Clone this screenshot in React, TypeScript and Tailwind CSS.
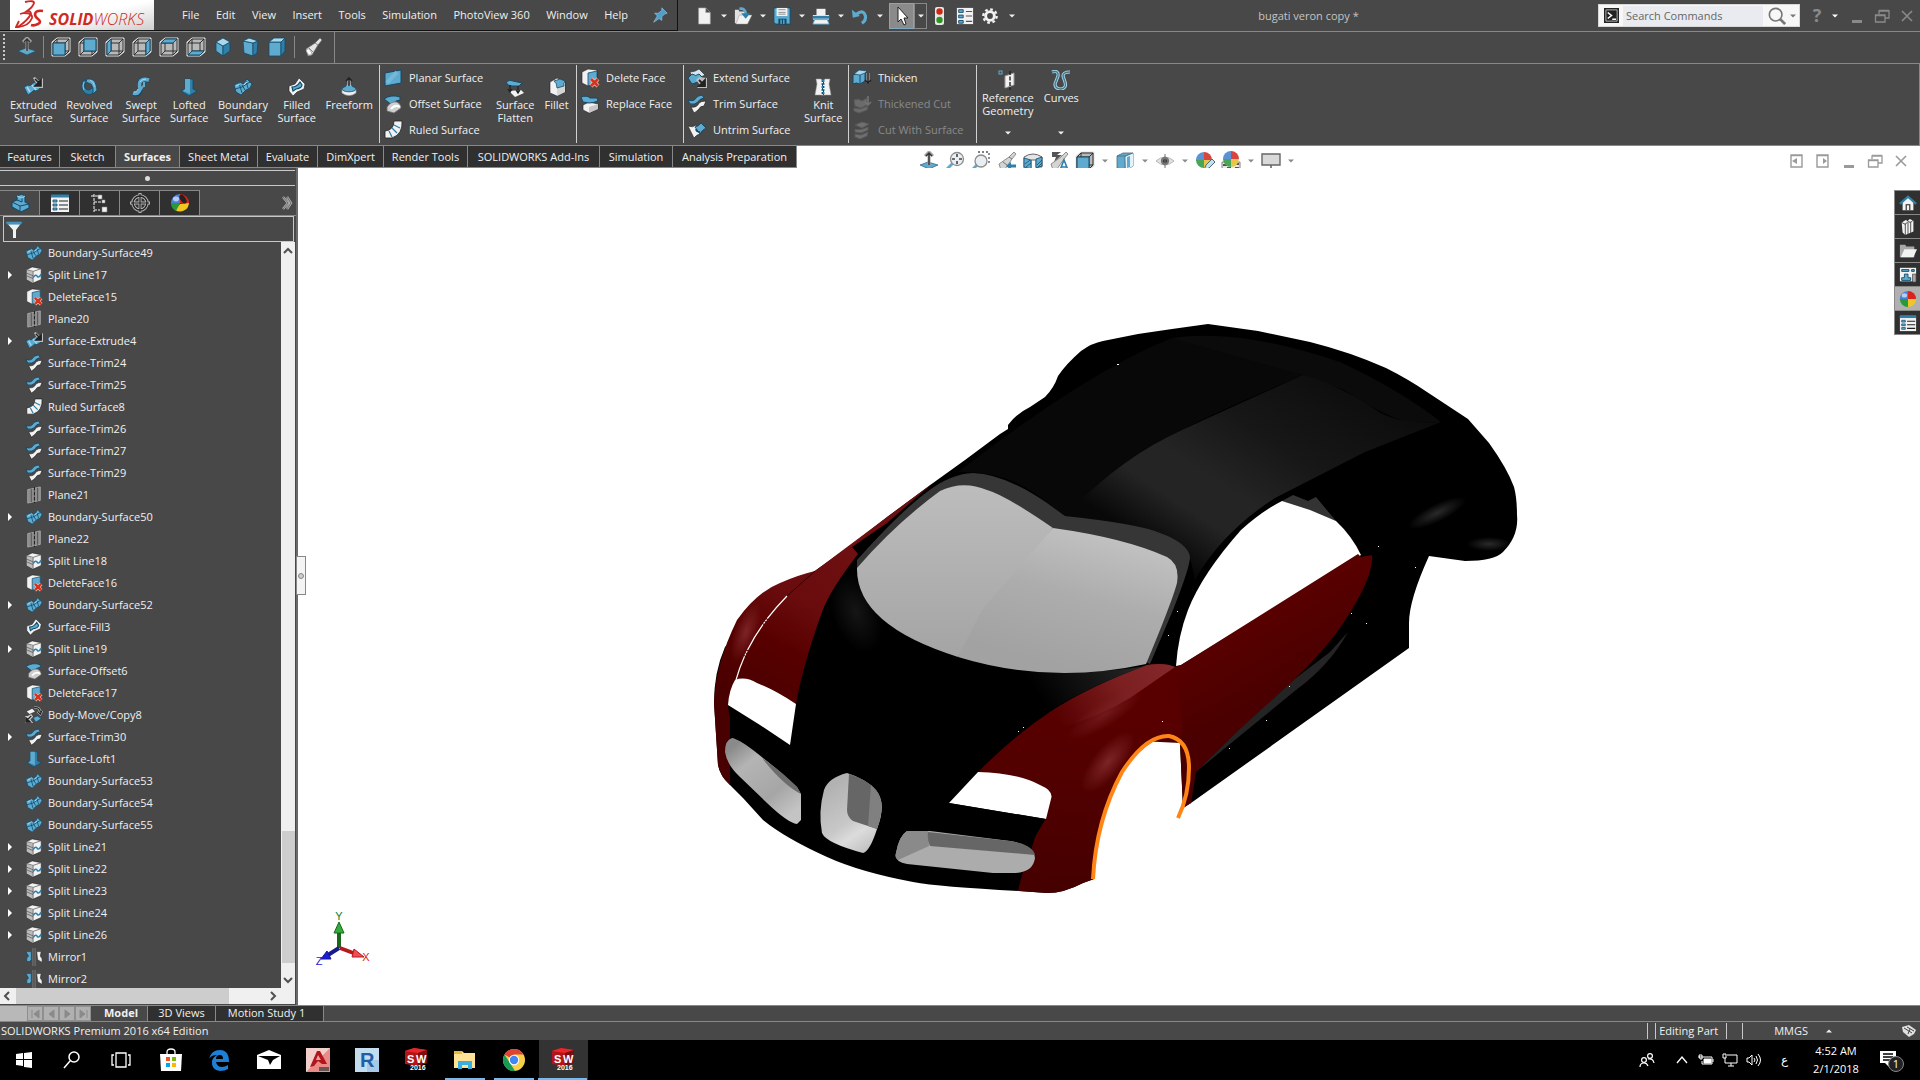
import type { ReactNode } from 'react';
import clsx from 'clsx';

type IconProps = { className?: string };

function Svg({ children, className }: { children: ReactNode; className?: string }) {
  return (
    <svg viewBox="0 0 20 20" className={clsx('block h-5 w-5 shrink-0', className)} fill="none" aria-hidden="true">
      {children}
    </svg>
  );
}

const BLUE = '#5fabd0';
const MID = '#2f7fa8';
const NAVY = '#124a68';
const PALE = '#a9d8ee';
const LIGHT = '#f2f2f2';
const GREY = '#9a9a9a';
const INK = '#222222';

const ICONS: Record<string, ReactNode> = {
  // surfaces
  extrude: (
    <>
      <path d="M1 10 L5 8 Q7 10 9 7 L12 5 L17 12 L13 14 Q11 12 9 15 L5 18 Z" fill={BLUE} stroke={NAVY} strokeWidth="0.8" />
      <path d="M4 10 L7 15 M9 8 L13 13" stroke={PALE} strokeWidth="1.5" />
      <path d="M10 1 L12 0 L16 4 L20 1 V11 H11 L14 8 Z" fill="#bdbdbd" />
      <path d="M12 2 L16 6 M18 3 V9 H12 Z" fill={INK} stroke={INK} strokeWidth="1.6" />
    </>
  ),
  revolve: (
    <>
      <path d="M5 3 Q1 8 4 14 Q9 20 14 16 L16 12 L13 11 Q9 15 6 11 Q4 7 8 4 Z" fill={MID} stroke={NAVY} strokeWidth="0.8" />
      <path d="M8 2 Q16 1 17 8 L18 13 L14 17 Q15 10 12 7 L7 5 Z" fill={BLUE} stroke={NAVY} strokeWidth="0.8" />
      <path d="M5 5 Q3 9 5 13 M11 3 Q15 5 16 10" stroke={PALE} strokeWidth="0.8" />
    </>
  ),
  sweep: (
    <>
      <path d="M2 16 Q8 19 9 13 Q8 9 9 5 Q11 1 18 3" stroke={NAVY} strokeWidth="5" />
      <path d="M2 16 Q8 18 9 12 Q8 8 9 5 Q11 1 18 3" stroke={BLUE} strokeWidth="3.6" />
      <path d="M10 13 Q11 9 13 9 L13 5" stroke={BLUE} strokeWidth="2" />
      <path d="M3 15 Q6 16 7 12 M9 5 Q11 2 15 2" stroke={PALE} />
    </>
  ),
  loft: (
    <>
      <path d="M6 2 H14 V12 L18 14 L10 19 L2 14 L6 12 Z" fill={MID} stroke={NAVY} strokeWidth="0.8" />
      <path d="M6 2 H11 V17 L4 14 L6 12 Z" fill={BLUE} />
    </>
  ),
  boundary: (
    <>
      <path d="M1 8 L7 5 L10 7 L14 2 L19 7 L17 11 L13 13 L8 18 L3 15 Z" fill={BLUE} stroke={NAVY} strokeWidth="0.9" />
      <path d="M2 12 L9 10 L17 5 M6 6 L9 16 M13 4 L15 11 M9 8 L12 13" stroke={NAVY} strokeWidth="0.9" />
      <path d="M3 9 L7 7 M11 8 L14 5" stroke={PALE} />
    </>
  ),
  fill: (
    <>
      <path d="M2 9 L8 7 L12 1 L18 7 L17 12 L10 15 L6 19 L2 14 Z" fill={LIGHT} stroke={INK} strokeWidth="0.6" />
      <path d="M5 10 Q10 10 13 5 L15 8 Q15 11 9 12 L6 14 Z" fill={BLUE} stroke={NAVY} strokeWidth="1.2" />
    </>
  ),
  freeform: (
    <>
      <path d="M3 12 Q10 8 17 12 V16 Q10 21 3 16 Z" fill={LIGHT} stroke={GREY} strokeWidth="0.7" />
      <ellipse cx="10" cy="12" rx="7" ry="2.8" fill={BLUE} stroke={NAVY} strokeWidth="0.8" />
      <path d="M6 11 Q10 3 14 11 Z" fill={BLUE} />
      <path d="M10 9 V2" stroke="#dddddd" strokeWidth="3" />
      <path d="M10 9 V2 M7 4 L10 1 L13 4" stroke={INK} strokeWidth="1.6" />
    </>
  ),
  planar: (
    <>
      <path d="M2 5 L18 2 V15 L2 18 Z" fill={BLUE} stroke={NAVY} />
      <path d="M4 15 L14 4" stroke="#75b9d9" strokeWidth="4" />
    </>
  ),
  offset: (
    <>
      <path d="M1 5 Q8 0 17 3 L17 6 Q12 6 9 11 Z" fill={BLUE} stroke={NAVY} />
      <path d="M4 13 Q8 7 14 8 Q18 10 18 14 L11 19 L4 17 Z" fill="#cfcfcf" stroke="#6d6d6d" strokeWidth="0.8" />
      <path d="M8 15 Q12 10 17 13" stroke="#ffffff" strokeWidth="2" />
    </>
  ),
  ruled: (
    <>
      <path d="M11 1 H19 Q20 14 9 18 L2 18 V11 Q11 10 11 1 Z" fill={LIGHT} stroke={INK} strokeWidth="0.8" />
      <path d="M11 5 L17 8 M9 8 L14 13 M6 11 L9 17" stroke={MID} strokeWidth="1.3" />
    </>
  ),
  flatten: (
    <>
      <path d="M1 5 Q5 2 8 4 L17 6 L14 9 L7 9 L3 8 Z" fill={BLUE} stroke={NAVY} />
      <path d="M4 14 L16 13 L19 16 L10 20 Z" fill={LIGHT} />
      <path d="M5 8 V14 M3 12 L5 15 L7 12 M13 9 V15 M11 13 L13 16 L15 13" stroke={INK} strokeWidth="1.3" />
    </>
  ),
  fillet: (
    <>
      <path d="M3 5 L10 1 L18 4 V15 L10 19 L3 16 Z" fill={LIGHT} stroke={INK} strokeWidth="0.6" />
      <path d="M10 19 V10 Q11 6 18 5 V15 Z" fill="#d5d5d5" />
      <path d="M7 4 L13 2 L18 4 Q16 7 17 9 L10 11 Q10 6 7 4 Z" fill={BLUE} stroke={NAVY} strokeWidth="0.8" />
    </>
  ),
  deleteFace: (
    <>
      <path d="M2 4 L8 1 L17 2 V14 L8 18 L2 15 Z" fill={LIGHT} stroke={INK} strokeWidth="0.6" />
      <path d="M8 5 L17 3 V15 L8 18 Z" fill={BLUE} stroke={NAVY} strokeWidth="0.8" />
      <path d="M11 11 L18 18 M18 11 L11 18" stroke="#ead0cc" strokeWidth="4" />
      <path d="M11 11 L18 18 M18 11 L11 18" stroke="#d8321c" strokeWidth="2.8" />
    </>
  ),
  replaceFace: (
    <>
      <path d="M3 11 L9 8 L18 10 V15 L9 19 L3 16 Z" fill={LIGHT} stroke={INK} strokeWidth="0.6" />
      <path d="M9 13 L18 10 V15 L9 19 Z" fill="#c8c8c8" />
      <path d="M1 3 Q7 1 10 4 L17 4 L18 7 Q13 9 9 9 L3 8 Z" fill={BLUE} stroke={NAVY} />
    </>
  ),
  extend: (
    <>
      <path d="M3 4 Q8 4 12 1 L18 7 L14 9 L5 10 Z" fill="#d5e8f0" stroke={INK} strokeWidth="0.6" />
      <path d="M1 10 L5 6 Q9 9 12 6 L17 11 L11 14 L5 16 Z" fill={BLUE} stroke={NAVY} />
      <path d="M9 12 L12 9 L20 10 V20 H10 L13 17 Z" fill="#bdbdbd" />
      <path d="M12 12 L16 16 M18 12 V18 H12 Z" fill={INK} stroke={INK} strokeWidth="1.8" />
    </>
  ),
  trim: (
    <>
      <path d="M1 6 Q7 8 9 4 Q10 2 15 1 L17 4 Q12 5 11 8 Q8 11 3 10 Z" fill={BLUE} stroke={NAVY} />
      <path d="M4 13 Q10 14 12 9 Q14 7 19 7 L17 12 Q13 12 12 15 Q9 18 7 19 Z" fill={LIGHT} stroke={INK} strokeWidth="0.7" />
    </>
  ),
  untrim: (
    <>
      <path d="M1 6 Q6 8 9 5 L14 14 Q10 14 7 18 Z" fill={LIGHT} stroke={INK} strokeWidth="0.6" />
      <path d="M8 7 Q12 6 14 3 L19 8 Q15 10 13 14 Z" fill={BLUE} stroke={NAVY} />
      <path d="M9 9 Q9 12 13 12" stroke={NAVY} strokeWidth="1.5" />
    </>
  ),
  knit: (
    <>
      <path d="M3 2 H8 Q10 5 12 2 H17 L16 7 L18 18 H2 L4 7 Z" fill={LIGHT} stroke={GREY} strokeWidth="0.5" />
      <path d="M10 3 V19" stroke={MID} strokeWidth="3" strokeDasharray="2 1" />
      <path d="M9 4 L11 6 L9 8 L11 10 L9 12 L11 14 L9 16 L11 18" stroke={NAVY} />
    </>
  ),
  thicken: (
    <>
      <path d="M1 7 Q5 5 8 6 L13 4 V13 L8 16 Q4 14 1 16 Z" fill={BLUE} stroke={NAVY} />
      <path d="M2 6 L7 2 L15 3 L13 5 L8 7 Z" fill={PALE} stroke={NAVY} strokeWidth="0.7" />
      <path d="M8 7 V15" stroke={NAVY} />
      <path d="M16 5 V15" stroke="#bbbbbb" strokeWidth="3" />
      <path d="M16 5 V14 M13 12 L16 15 L19 12" stroke={INK} strokeWidth="1.5" />
    </>
  ),
  thickenCut: (
    <>
      <path d="M2 6 Q7 4 10 7 L15 4 V11 L9 14 L3 12 Z M2 14 L8 15 L16 12 L15 16 L7 19 L2 17 Z" fill="#6b6b6b" stroke="#5a5a5a" />
      <path d="M16 2 V10 M13 8 L16 11 L19 8" stroke="#757575" strokeWidth="1.5" />
    </>
  ),
  cutWith: (
    <path d="M3 5 L10 2 L17 4 L10 8 Z M3 9 Q8 11 16 7 L16 10 L9 13 L3 12 Z M3 14 L9 15 L16 12 L15 16 L8 19 L3 17 Z" fill="#707070" stroke="#5a5a5a" />
  ),
  refGeom: (
    <>
      <rect x="1" y="1" width="3" height="3" stroke={BLUE} />
      <path d="M7 6 L16 3 V15 L7 18 Z" fill={LIGHT} stroke={GREY} />
      <path d="M12 1 V20" stroke={INK} strokeWidth="1.4" strokeDasharray="4 1.5" />
    </>
  ),
  curves: (
    <>
      <path d="M1 2 Q8 0 7 6 L4 14 Q4 19 10 19 Q16 18 14 12 L12 6 Q12 2 19 2" stroke={PALE} strokeWidth="3.2" />
      <path d="M1 2 Q8 0 7 6 L4 14 Q4 19 10 19 Q16 18 14 12 L12 6 Q12 2 19 2" stroke="#49768c" strokeWidth="1.4" />
    </>
  ),
  split: (
    <>
      <path d="M2 4 L8 1 L18 3 V15 L9 19 L2 15 Z" fill={LIGHT} stroke={INK} strokeWidth="0.6" />
      <path d="M2 4 L9 7 V19 L2 15 Z" fill="#bdbdbd" />
      <path d="M2 4 L9 6 L18 3 M9 6 V19 M2 8 L9 11 M2 11 L9 14" stroke="#555555" strokeWidth="0.8" />
      <path d="M9 13 Q12 8 14 12 Q16 13 18 9" stroke={MID} strokeWidth="1.8" />
    </>
  ),
  plane: (
    <>
      <path d="M3 4 L17 1 V16 L3 19 Z" fill="#8d8d8d" stroke="#b5b5b5" strokeWidth="0.8" />
      <path d="M7 3 V18 M14 2 V17" stroke="#4a4a4a" strokeWidth="0.9" />
      <path d="M10.5 1 V19" stroke={INK} strokeWidth="1.2" strokeDasharray="4 1.5" />
    </>
  ),
  move: (
    <>
      <path d="M2 6 L8 3 L11 6 L5 9 Z" fill={LIGHT} />
      <path d="M9 13 L14 11 L18 14 L12 18 Z" fill={BLUE} stroke={NAVY} strokeWidth="0.7" />
      <path d="M10 2 Q17 1 17 7 M14 6 L17 9 L19 5" stroke="#cccccc" strokeWidth="2.6" />
      <path d="M10 2 Q17 1 17 7 M14 6 L17 9 L19 5" stroke={INK} strokeWidth="1.4" />
      <path d="M0 11 H3 L7 9 L9 12 L6 15 L9 19 H0 Z" fill="#cccccc" />
      <path d="M7 11 L3 15 M1 13 V18 H6 Z" stroke={INK} fill={INK} strokeWidth="1.4" />
    </>
  ),
  mirror: (
    <>
      <path d="M1 4 H7 V13 L5 15 H2 V11 L4 9 Z" fill={BLUE} stroke={NAVY} strokeWidth="0.8" />
      <path d="M13 4 H18 L17 9 L19 12 V16 L14 13 Z" fill={LIGHT} stroke={INK} strokeWidth="0.6" />
      <path d="M10 0 V20" stroke="#bbbbbb" strokeWidth="2.8" />
      <path d="M10 0 V20" stroke={INK} strokeWidth="1.4" />
    </>
  ),
  // standard views
  normalTo: (
    <>
      <path d="M1 14 L9 11 L19 14 L10 18 Z" fill={BLUE} stroke={NAVY} strokeWidth="0.6" />
      <path d="M10 14 V3 M6 5 L10 1 L14 5" stroke="#a5a5a5" strokeWidth="3" />
      <path d="M10 14 V3 M7 5 L10 2 L13 5" stroke="#333333" strokeWidth="1.4" />
    </>
  ),
  zoomFit: (
    <>
      <path d="M1 19 L8 12" stroke={BLUE} strokeWidth="3" />
      <circle cx="12" cy="8" r="6.5" fill="#e8eef2" stroke="#8d8d8d" strokeWidth="1.3" />
      <path d="M12 3 V6 M12 10 V13 M7 8 H10 M14 8 H17" stroke="#444444" strokeWidth="1.6" />
    </>
  ),
  zoomArea: (
    <>
      <path d="M7 1 H18 V14" stroke="#555555" strokeDasharray="2 2" strokeWidth="1.3" />
      <path d="M1 19 L6 14" stroke={BLUE} strokeWidth="3" />
      <circle cx="10" cy="10" r="6" fill="#e8eef2" stroke="#8d8d8d" strokeWidth="1.3" />
    </>
  ),
  scope: (
    <>
      <path d="M2 13 L12 6 L17 1 L19 3 L15 8 L8 18 L4 19 Z" fill="#d4d4d4" stroke="#777777" strokeWidth="0.8" />
      <path d="M6 11 L10 14 M12 6 L15 8" stroke="#777777" />
      <path d="M19 15 H13" stroke={MID} strokeWidth="3" />
      <path d="M14 11 V19 L9 15 Z" fill={MID} />
    </>
  ),
  telescope: (
    <>
      <path d="M3 12 L12 6 L17 1 L19 3 L15 8 L9 18 L5 19 Z" fill="#e4e4e4" stroke="#6b6b6b" strokeWidth="0.7" />
      <path d="M6 11 L10 15 M12 6 L15 8" stroke="#888888" />
      <ellipse cx="6" cy="15" rx="2" ry="3.5" fill="#ffffff" stroke="#888888" strokeWidth="0.6" transform="rotate(-35 6 15)" />
    </>
  ),
  section: (
    <>
      <path d="M1 6 Q10 0 19 6 V16 H13 V9 H8 V18 H1 Z" fill="#e5e5e5" stroke="#666666" />
      <path d="M1 7 L8 9 V18 L1 16 Z M13 8 L19 6 V15 L13 17 Z" fill={BLUE} stroke={NAVY} strokeWidth="0.8" />
      <path d="M2 13 L7 9 M3 16 L8 12 M14 14 L19 9 M15 16 L19 12" stroke={NAVY} strokeWidth="0.8" />
    </>
  ),
  annot: (
    <>
      <path d="M3 1 H12 L8 4 H13 L5 11 L7 6 H3 Z" fill="#555555" />
      <path d="M2 13 L12 6 L17 1 L19 3 L15 8 L8 18 L4 19 Z" fill="#d4d4d4" stroke="#777777" strokeWidth="0.8" />
      <path d="M11 19 L15 9 L19 19 M12 16 H18" stroke={MID} strokeWidth="1.6" />
    </>
  ),
  display: (
    <>
      <path d="M2 5 L8 2 H18 V15 L11 19 L2 17 Z" fill={BLUE} stroke="#4f6875" strokeWidth="0.8" />
      <path d="M10 6 L18 2 V15 L11 19 Z" fill="#e4f3fa" />
      <path d="M2 5 H10 L18 2 M10 5 V18" stroke="#4f6875" strokeWidth="0.8" />
      <path d="M12 6 L15 5 V16 L12 17 Z" fill={BLUE} />
    </>
  ),
  eye: (
    <>
      <path d="M1 10 Q10 2 19 10 Q10 18 1 10 Z" fill="#e2e2e2" stroke="#aaaaaa" strokeWidth="0.8" />
      <circle cx="10" cy="10" r="4.2" fill="#777777" />
      <circle cx="10" cy="10" r="2" fill="#333333" />
      <path d="M10 3 V17" stroke="#777777" />
    </>
  ),
  monitor: (
    <>
      <path d="M1 3 H19 V14 H1 Z" fill="#d9d9d9" stroke="#666666" strokeWidth="1.4" />
      <path d="M10 14 V18 M6 18 H14" stroke="#666666" strokeWidth="1.6" />
    </>
  ),
  // shell
  part: (
    <>
      <path d="M2 9 L7 7 L7 3 L12 1 L15 3 V9 L19 11 V15 L11 19 L2 14 Z" fill={BLUE} stroke={NAVY} strokeWidth="1.1" />
      <path d="M2 9 L10 13 V18 M10 13 L19 11 M7 7 L12 9 M12 4 V9" stroke={NAVY} />
      <path d="M7 3 L12 5 L15 3" stroke={PALE} />
    </>
  ),
  props: (
    <>
      <path d="M1 2 H19 V19 H1 Z" fill={LIGHT} />
      <path d="M1 3 H19" stroke={MID} strokeWidth="3" />
      <path d="M3 7 H7 V9 H3 Z M3 11 H7 V13 H3 Z M3 15 H7 V17 H3 Z" fill={BLUE} stroke={NAVY} strokeWidth="0.8" />
      <path d="M9 8 H18 M9 12 H18 M9 16 H18" stroke={INK} strokeWidth="1.2" />
    </>
  ),
  list: (
    <>
      <path d="M1 1 H19 V19 H1 Z" fill={LIGHT} />
      <path d="M3 3 H8 V6 H3 Z M3 9 H8 V12 H3 Z M3 15 H8 V18 H3 Z" fill={BLUE} stroke={NAVY} />
      <path d="M11 5 H18 M11 10 H18 M11 16 H18" stroke="#555555" strokeWidth="1.3" />
    </>
  ),
  config: (
    <>
      <path d="M4 1 V19 M1 3 H8 M4 9 H12 M4 17 H10" stroke={LIGHT} strokeWidth="1" strokeDasharray="3 1" />
      <path d="M8 2 H12 V6 H8 Z M12 7 H15 V10 H12 Z M12 14 H17 V19 H12 Z" fill={LIGHT} stroke="#888888" strokeWidth="0.6" />
    </>
  ),
  target: (
    <>
      <circle cx="10" cy="10" r="7" stroke="#b5b5b5" strokeWidth="3.4" />
      <path d="M10 0 V20 M0 10 H20" stroke="#b5b5b5" strokeWidth="3" />
      <circle cx="10" cy="10" r="7" stroke={INK} strokeWidth="1.4" />
      <path d="M10 1 V19 M1 10 H19" stroke={INK} strokeWidth="1.2" />
    </>
  ),
  ball: (
    <>
      <path d="M10 10 V1 A9 9 0 0 0 1 11 Z" fill="#4a7fd8" />
      <path d="M10 10 V1 A9 9 0 0 1 19 10 Z" fill="#d9241d" />
      <path d="M10 10 H19 A9 9 0 0 1 10 19 Z" fill="#efc42d" />
      <path d="M10 10 V19 A9 9 0 0 1 1 10 Z" fill="#279b3b" />
      <ellipse cx="6" cy="6" rx="3" ry="2.4" fill="#dfeeff" opacity="0.7" />
    </>
  ),
  displayBall: (
    <>
      <path d="M10 10 V1 A9 9 0 0 0 1 11 Z" fill="#4a7fd8" />
      <path d="M10 10 V1 A9 9 0 0 1 19 10 Z" fill="#d9241d" />
      <path d="M10 11 L19 10 A9 9 0 0 1 5 17 Z" fill="#f2c81f" />
      <path d="M10 10 L6 18 A9 9 0 0 1 1 10 Z" fill="#279b3b" />
      <ellipse cx="13" cy="6" rx="2.6" ry="5" fill={INK} transform="rotate(-35 13 6)" />
      <ellipse cx="6" cy="6" rx="3" ry="2.4" fill="#ffffff" opacity="0.6" />
    </>
  ),
  ballPencil: (
    <>
      <path d="M9 9 V1 A8 8 0 0 0 1 10 Z" fill="#5b93d4" />
      <path d="M9 9 V1 A8 8 0 0 1 17 9 Z" fill="#d6463f" />
      <path d="M9 9 H17 A8 8 0 0 1 9 17 Z" fill="#e7c64a" />
      <path d="M9 9 V17 A8 8 0 0 1 1 9 Z" fill="#4aa557" />
      <path d="M9 19 L11 14 L17 8 L20 11 L14 17 Z" fill="#bfe1f1" stroke="#4f6875" />
    </>
  ),
  scene: (
    <>
      <path d="M1 11 H19 V19 H1 Z" fill="#e8e8e8" stroke="#666666" strokeWidth="0.8" />
      <path d="M2 13 H6 V15 H2 Z M6 16 H10 V19 H6 Z M14 16 H18 V19 H14 Z M14 12 H18 V14 H14 Z" fill="#555555" />
      <path d="M10 8 V0 A8 8 0 0 0 2 8 Z" fill="#5b93d4" />
      <path d="M10 8 V0 A8 8 0 0 1 18 8 Z" fill="#d6463f" />
      <path d="M10 8 H18 A8 8 0 0 1 10 16 Z" fill="#e7c64a" />
      <path d="M10 8 V16 A8 8 0 0 1 2 8 Z" fill="#4aa557" />
    </>
  ),
  home: (
    <>
      <path d="M4 9 L10 4 L16 9 V18 H4 Z" fill={LIGHT} />
      <path d="M1 11 L10 3 L19 11" stroke={MID} strokeWidth="2.4" />
      <path d="M8 18 V12 H12 V18" stroke={INK} strokeWidth="1.2" />
    </>
  ),
  library: (
    <>
      <path d="M3 5 L8 2 L9 4 L12 1 L16 3 V15 L7 19 L4 16 Z" fill={LIGHT} />
      <path d="M7 6 V19 M10 5 V18 M13 4 V17 M3 5 L7 7 L10 4 L13 5 L16 2" stroke="#444444" strokeWidth="1" />
    </>
  ),
  folder: (
    <>
      <path d="M1 3 H7 L8 5 H17 V17 H1 Z" fill="#a8a8a8" />
      <path d="M6 8 H20 L16 17 H2 Z" fill={LIGHT} />
    </>
  ),
  palette: (
    <>
      <path d="M1 2 H19 V17 H1 Z" fill={LIGHT} />
      <path d="M3 4 H11 V6 H3 Z M14 4 H17 V6 H14 Z M6 9 H10 V13 H13 V16 H3 V13 H6 Z" fill={BLUE} stroke={NAVY} />
      <path d="M15 9 H19 V18 H15 Z" fill="#a5a5a5" stroke={INK} strokeWidth="0.6" />
    </>
  ),
  // quick access
  newDoc: <path d="M4 1 H12 L17 6 V19 H4 Z M12 1 V6 H17" fill={LIGHT} stroke="#9a9a9a" strokeWidth="0.7" />,
  open: (
    <>
      <path d="M1 3 H5 L6 5 H13 V18 H1 Z" fill="#e0e0e0" />
      <path d="M6 9 H20 L15 19 H2 Z" fill={LIGHT} stroke="#8a8a8a" strokeWidth="0.5" />
      <path d="M6 2 Q13 1 13 8" stroke={BLUE} strokeWidth="3" />
      <path d="M8 7 H18 L13 13 Z" fill={MID} />
    </>
  ),
  save: (
    <>
      <path d="M1 1 H19 V19 H3 L1 17 Z" fill={BLUE} stroke={NAVY} />
      <path d="M4 1 H16 V10 H4 Z" fill={LIGHT} />
      <path d="M6 3 H14 M6 6 H14 M6 8 H14" stroke="#888888" />
      <path d="M6 13 H15 V19 H6 Z" fill={NAVY} />
      <path d="M9 14 V19 M12 14 V19" stroke={BLUE} strokeWidth="1.5" />
    </>
  ),
  print: (
    <>
      <path d="M5 2 H15 V9 H5 Z" fill={LIGHT} />
      <path d="M1 9 H19 V14 H1 Z" fill={LIGHT} />
      <path d="M1 10 H19 V13 H1 Z" fill={MID} />
      <path d="M3 14 H17 L19 19 H1 Z" fill={LIGHT} stroke={BLUE} />
    </>
  ),
  undo: (
    <>
      <path d="M6 8 Q14 2 16 10 Q17 15 12 18" stroke={BLUE} strokeWidth="3.5" />
      <path d="M1 3 L2 12 L10 10 Z" fill={BLUE} />
    </>
  ),
  cursor: <path d="M6 1 V16 L9 13 L12 19 L14 18 L12 12 H16 Z" fill="#ffffff" stroke={INK} />,
  traffic: (
    <>
      <rect x="6" y="1" width="9" height="18" rx="2" fill="#e8e8e8" />
      <circle cx="10.5" cy="5.5" r="3.2" fill="#cf2a10" />
      <circle cx="10.5" cy="14" r="3.2" fill="#2f9423" />
    </>
  ),
  gear: (
    <>
      <circle cx="10" cy="10" r="7.4" stroke={LIGHT} strokeWidth="2.6" strokeDasharray="3 2.8" />
      <circle cx="10" cy="10" r="4.8" stroke={LIGHT} strokeWidth="3.2" />
    </>
  ),
  pin: (
    <path d="M12 2 L18 8 L15 9 L12 12 L12 16 L9 14 L3 18 L7 11 L4 8 L8 8 L12 5 Z" fill="#4f9fc9" stroke="#8fc9e4" strokeWidth="0.7" />
  ),
  term: (
    <>
      <path d="M1 1 H19 V19 H1 Z" fill={INK} stroke={INK} strokeWidth="2" />
      <path d="M2.5 2.5 H17.5 V17.5 H2.5 Z" stroke="#dddddd" />
      <path d="M5 6 L10 10 L5 14 M11 15 H16" stroke="#ffffff" strokeWidth="2" />
    </>
  ),
  magnifier: (
    <>
      <circle cx="8.5" cy="8.5" r="7" stroke="#777777" strokeWidth="1.8" />
      <path d="M13.5 13.5 L19 19" stroke="#777777" strokeWidth="3" />
    </>
  ),
  minimize: <path d="M5 15.5 H15" stroke="currentColor" strokeWidth="3" />,
  restore: (
    <path d="M7 8 V5 H17 V12 H13 M7 4.5 H17 M3.5 9 H13 V16 H3.5 Z M3.5 9.5 H13" stroke="currentColor" strokeWidth="1.3" />
  ),
  close: <path d="M5 5 L15 15 M15 5 L5 15" stroke="currentColor" strokeWidth="1.6" />,
  panelLeft: (
    <>
      <path d="M4 4 H15 V16 H4 Z M4 4.5 H15" stroke={GREY} strokeWidth="1.4" />
      <path d="M10 7 V13 L5 10 Z" fill={GREY} />
    </>
  ),
  panelRight: (
    <>
      <path d="M4 4 H15 V16 H4 Z M4 4.5 H15" stroke={GREY} strokeWidth="1.4" />
      <path d="M10 7 V13 L14 10 Z" fill={GREY} />
    </>
  ),
  filter: (
    <>
      <path d="M2 3 H18 L12 11 V19 H9 V11 Z" fill={LIGHT} />
      <path d="M2 3 H18 L17 5 H3 Z" fill={BLUE} stroke={MID} />
    </>
  ),
  chevrons: (
    <>
      <path d="M7 4 L12 10 L7 16 M11 4 L15 10 L11 16" stroke="#b0b0b0" strokeWidth="2.4" />
      <path d="M7 4 L12 10 L7 16 M11 4 L15 10 L11 16" stroke="#5a5a5a" strokeWidth="0.8" />
    </>
  ),
};

function Icon({ name, className }: { name: string } & IconProps) {
  return <Svg className={className}>{ICONS[name]}</Svg>;
}

// Wireframe cube with one blue face
function CubeIcon({ face }: { face: string }) {
  return (
    <Svg>
      <path d="M1 5 L6 1 H19 V15 L14 19 H1 Z" fill="#b9b9b9" stroke="#e2e2e2" strokeWidth="1" />
      <path d="M2 6 H14 V18 H2 Z M2 6 L6 2 H18 V14 L14 18 M14 6 L18 2 M6 2 V14 H18 M6 14 L2 18" stroke="#222222" strokeWidth="0.9" />
      <path d={face} fill={BLUE} stroke={NAVY} strokeWidth="1" />
    </Svg>
  );
}

const FACES = {
  front: 'M2 6 H14 V18 H2 Z',
  back: 'M6 2 H18 V14 H6 Z',
  left: 'M2 6 L6 2 V14 L2 18 Z',
  right: 'M14 6 L18 2 V14 L14 18 Z',
  top: 'M2 6 L6 2 H18 L14 6 Z',
  bottom: 'M2 18 L6 14 H18 L14 18 Z',
};

function SolidCube({ kind }: { kind: 'iso' | 'tri' | 'di' }) {
  const top = { iso: 'M10 1 L17 5 L10 9 L3 5 Z', tri: 'M9 1 L18 4 L13 6 L3 4 Z', di: 'M2 5 L7 1 H18 L14 5 Z' }[kind];
  const left = { iso: 'M3 5 L10 9 V19 L3 14 Z', tri: 'M3 4 L13 6 V19 L4 16 Z', di: 'M2 5 H14 V19 H2 Z' }[kind];
  const right = { iso: 'M17 5 L10 9 V19 L17 14 Z', tri: 'M18 4 L13 6 V19 L17 16 Z', di: 'M14 5 L18 1 V14 L14 19 Z' }[kind];
  return (
    <Svg>
      <path d={left} fill={BLUE} stroke={NAVY} strokeWidth="0.8" />
      <path d={right} fill={MID} stroke={NAVY} strokeWidth="0.8" />
      <path d={top} fill={PALE} stroke={NAVY} strokeWidth="0.8" />
    </Svg>
  );
}

function Caret({ className }: IconProps) {
  return (
    <svg viewBox="0 0 8 4" className={clsx('block h-1 w-[6px] shrink-0', className)} aria-hidden="true">
      <path d="M0 0 H8 L4 4 Z" fill="currentColor" />
    </svg>
  );
}

const MENUS = ['File', 'Edit', 'View', 'Insert', 'Tools', 'Simulation', 'PhotoView 360', 'Window', 'Help'];
const QUICK = ['newDoc', 'open', 'save', 'print', 'undo'];

function TitleBar() {
  return (
    <header className="flex h-8 items-center border-b border-[#888888]">
      <div className="flex h-full w-[678px] shrink-0 items-center border-r border-b border-[#111111]">
        <div className="ml-[10px] flex h-full w-36 shrink-0 items-center bg-gradient-to-br from-white via-white to-[#cfcfcf]">
          <svg viewBox="0 0 34 31" className="ml-[5px] h-[31px] w-[34px]" fill="none" stroke="#cf2a22" aria-hidden="true">
            <path d="M10 2 Q19 0 19 3 Q18 7 12 11 Q16 11 16 14 Q13 20 3 27 L1 27 L4 21" strokeWidth="1.8" />
            <path d="M3 27 Q14 26 17 18 Q18 13 9 13 L5 14" strokeWidth="1.8" />
            <path d="M28 11 Q21 10 20 14 Q20 17 23 19 Q27 22 23 24 Q19 26 16 25" strokeWidth="2.6" />
          </svg>
          <span className="mt-2 text-[16px] leading-5 text-[#cf2a22] italic">
            <b>SOLID</b><span className="font-light">WORKS</span>
          </span>
        </div>
        <nav className="ml-5 flex w-[462px] items-center justify-between pt-px">
          {MENUS.map((m) => (
            <button key={m} className="px-2 whitespace-nowrap">{m}</button>
          ))}
        </nav>
        <button aria-label="Pin menu" className="mr-2 ml-auto"><Icon name="pin" className="h-[18px] w-[18px]" /></button>
      </div>

      <div className="ml-4 flex items-center">
        {QUICK.map((q) => (
          <div key={q} className="flex items-center">
            <button aria-label={q}><Icon name={q} className="p-px" /></button>
            <button aria-label={`${q} options`} className="flex w-[19px] justify-center"><Caret /></button>
          </div>
        ))}
        <button aria-label="Select" className="flex h-[26px] w-[25px] items-center justify-center border border-[#7fa9c0] bg-[#8a8a8a]">
          <Icon name="cursor" />
        </button>
        <button aria-label="Select options" className="flex h-[26px] w-[13px] items-center justify-center border border-[#888888]">
          <Caret />
        </button>
        <div className="ml-[2px] flex items-center gap-[6px]">
          <button aria-label="Rebuild"><Icon name="traffic" /></button>
          <button aria-label="File properties"><Icon name="list" className="p-px" /></button>
          <button aria-label="Options"><Icon name="gear" className="h-[18px] w-[18px]" /></button>
          <button aria-label="More options" className="px-1"><Caret /></button>
        </div>
      </div>

      <h1 className="flex-1 pt-px text-center text-[#c4c4c4]">bugati veron copy *</h1>

      <label className="flex h-[23px] w-[202px] items-center border border-[#d8d8d8] bg-[#f7f7f8] pl-[5px] text-[#555555]">
        <Icon name="term" className="h-[15px] w-[15px]" />
        <input aria-label="Search Commands" placeholder="Search Commands" className="ml-1 h-5 w-[140px] bg-[#e9ebf0] px-[3px] placeholder:text-[#666666] focus:outline-none" />
        <Icon name="magnifier" className="ml-[5px] h-[18px] w-[18px]" />
        <Caret className="mx-auto text-[#777777]" />
      </label>
      <div className="mr-[3px] ml-[7px] flex items-center gap-[5px] text-[#8a8a8a]">
        <button aria-label="Help" className="w-5 text-[18px] font-bold">?</button>
        <Caret className="text-white" />
        <button aria-label="Minimize" className="ml-1"><Icon name="minimize" /></button>
        <button aria-label="Restore"><Icon name="restore" /></button>
        <button aria-label="Close"><Icon name="close" /></button>
      </div>
    </header>
  );
}

function ViewsBar() {
  return (
    <div className="flex h-8 border-b border-[#888888]">
      <div className="flex w-[335px] items-center border-r border-[#888888] pb-px">
        <div className="mr-3 ml-[3px] h-[26px] border-l-2 border-dotted border-[#c8c8c8]" />
        <button aria-label="Normal to"><Icon name="normalTo" /></button>
        <div className="mr-[7px] ml-[6px] h-[22px] w-px bg-[#888888]" />
        <div className="flex gap-[7px]">
          {Object.entries(FACES).map(([key, face]) => (
            <button key={key} aria-label={key}><CubeIcon face={face} /></button>
          ))}
          <button aria-label="Isometric"><SolidCube kind="iso" /></button>
          <button aria-label="Trimetric"><SolidCube kind="tri" /></button>
          <button aria-label="Dimetric"><SolidCube kind="di" /></button>
        </div>
        <div className="mr-2 ml-[7px] h-[22px] w-px bg-[#888888]" />
        <button aria-label="View orientation"><Icon name="telescope" /></button>
      </div>
    </div>
  );
}

function BigButton({ icon, lines, menu }: { icon: string; lines: string[]; menu?: boolean }) {
  return (
    <button className={clsx('flex flex-col items-center leading-[13px] whitespace-nowrap', menu ? 'pt-[5px]' : 'pt-3')}>
      <Icon name={icon} />
      <span className={clsx('mt-px flex flex-col', menu && 'h-[38px]')}>
        {lines.map((l) => <span key={l}>{l}</span>)}
      </span>
      {menu && <Caret className="mt-[2px]" />}
    </button>
  );
}

function SmallButtons({ items, className }: { items: Array<[string, string, boolean?]>; className?: string }) {
  return (
    <div className={clsx('flex flex-col', className)}>
      {items.map(([icon, label, disabled]) => (
        <button key={label} disabled={disabled}
          className={clsx('flex h-[26px] items-center gap-[6px] whitespace-nowrap', disabled && 'text-[#8a8a8a]')}>
          <Icon name={icon} /> {label}
        </button>
      ))}
    </div>
  );
}

function Ribbon() {
  return (
    <div className="flex h-[82px] border-r border-b border-[#888888] pt-px pb-[2px]">
      <div className="flex w-[380px] justify-between border-r border-[#d0d0d0] pr-[6px] pl-[10px]">
        <BigButton icon="extrude" lines={['Extruded', 'Surface']} />
        <BigButton icon="revolve" lines={['Revolved', 'Surface']} />
        <BigButton icon="sweep" lines={['Swept', 'Surface']} />
        <BigButton icon="loft" lines={['Lofted', 'Surface']} />
        <BigButton icon="boundary" lines={['Boundary', 'Surface']} />
        <BigButton icon="fill" lines={['Filled', 'Surface']} />
        <BigButton icon="freeform" lines={['Freeform']} />
      </div>
      <div className="flex w-[197px] border-r border-[#d0d0d0] pl-[3px]">
        <SmallButtons className="w-[113px]" items={[['planar', 'Planar Surface'], ['offset', 'Offset Surface'], ['ruled', 'Ruled Surface']]} />
        <div className="flex gap-[10px]">
          <BigButton icon="flatten" lines={['Surface', 'Flatten']} />
          <BigButton icon="fillet" lines={['Fillet']} />
        </div>
      </div>
      <div className="w-[107px] border-r border-[#d0d0d0] pl-[3px]">
        <SmallButtons items={[['deleteFace', 'Delete Face'], ['replaceFace', 'Replace Face']]} />
      </div>
      <div className="flex w-[165px] border-r border-[#d0d0d0] pl-[3px]">
        <SmallButtons className="w-[117px]" items={[['extend', 'Extend Surface'], ['trim', 'Trim Surface'], ['untrim', 'Untrim Surface']]} />
        <BigButton icon="knit" lines={['Knit', 'Surface']} />
      </div>
      <div className="w-[128px] border-r border-[#d0d0d0] pl-[3px]">
        <SmallButtons items={[['thicken', 'Thicken'], ['thickenCut', 'Thickened Cut', true], ['cutWith', 'Cut With Surface', true]]} />
      </div>
      <div className="flex gap-[10px] pl-[5px]">
        <BigButton icon="refGeom" lines={['Reference', 'Geometry']} menu />
        <BigButton icon="curves" lines={['Curves']} menu />
      </div>
    </div>
  );
}

const TABS: Array<[string, string]> = [
  ['Features', 'w-[60px]'],
  ['Sketch', 'w-[56px]'],
  ['Surfaces', 'w-[64px]'],
  ['Sheet Metal', 'w-[78px]'],
  ['Evaluate', 'w-[60px]'],
  ['DimXpert', 'w-[66px]'],
  ['Render Tools', 'w-[84px]'],
  ['SOLIDWORKS Add-Ins', 'w-[132px]'],
  ['Simulation', 'w-[73px]'],
  ['Analysis Preparation', 'w-[124px]'],
];

const HEADS_UP = [
  'normalTo', 'zoomFit', 'zoomArea', 'scope', 'section', 'annot', 'orient', '|',
  'display', '|', 'eye', '|', 'ballPencil', 'scene', '|', 'monitor', '|',
];

function TabRow() {
  return (
    <div className="flex h-[22px] bg-white">
      <div role="tablist" className="flex shrink-0">
        {TABS.map(([label, width]) => {
          const active = label === 'Surfaces';
          return (
            <button key={label} role="tab" aria-selected={active}
              className={clsx('border-r border-b border-[#888888] pt-[2px] whitespace-nowrap', width, active ? 'bg-[#484848] font-bold' : 'bg-[#303030]')}>
              {label}
            </button>
          );
        })}
      </div>
      <div className="mt-[5px] ml-[122px] flex h-5 items-center gap-[6px] text-[#8a8a8a]">
        {HEADS_UP.map((name, i) => {
          if (name === '|') return <Caret key={i} className="mx-px" />;
          return (
            <button key={i} aria-label={name}>
              {name === 'orient' ? <CubeIcon face={FACES.front} /> : <Icon name={name} />}
            </button>
          );
        })}
      </div>
      <div className="mt-[5px] mr-[9px] ml-auto flex h-5 items-center gap-[6px] text-[#9a9a9a]">
        <button aria-label="Expand left"><Icon name="panelLeft" /></button>
        <button aria-label="Expand right"><Icon name="panelRight" /></button>
        <button aria-label="Minimize document"><Icon name="minimize" /></button>
        <button aria-label="Restore document"><Icon name="restore" /></button>
        <button aria-label="Close document"><Icon name="close" /></button>
      </div>
    </div>
  );
}

// [icon, label, expandable]
const TREE: Array<[string, string, boolean?]> = [
  ['boundary', 'Boundary-Surface49'],
  ['split', 'Split Line17', true],
  ['deleteFace', 'DeleteFace15'],
  ['plane', 'Plane20'],
  ['extrude', 'Surface-Extrude4', true],
  ['trim', 'Surface-Trim24'],
  ['trim', 'Surface-Trim25'],
  ['ruled', 'Ruled Surface8'],
  ['trim', 'Surface-Trim26'],
  ['trim', 'Surface-Trim27'],
  ['trim', 'Surface-Trim29'],
  ['plane', 'Plane21'],
  ['boundary', 'Boundary-Surface50', true],
  ['plane', 'Plane22'],
  ['split', 'Split Line18'],
  ['deleteFace', 'DeleteFace16'],
  ['boundary', 'Boundary-Surface52', true],
  ['fill', 'Surface-Fill3'],
  ['split', 'Split Line19', true],
  ['offset', 'Surface-Offset6'],
  ['deleteFace', 'DeleteFace17'],
  ['move', 'Body-Move/Copy8'],
  ['trim', 'Surface-Trim30', true],
  ['loft', 'Surface-Loft1'],
  ['boundary', 'Boundary-Surface53'],
  ['boundary', 'Boundary-Surface54'],
  ['boundary', 'Boundary-Surface55'],
  ['split', 'Split Line21', true],
  ['split', 'Split Line22', true],
  ['split', 'Split Line23', true],
  ['split', 'Split Line24', true],
  ['split', 'Split Line26', true],
  ['mirror', 'Mirror1'],
  ['mirror', 'Mirror2'],
];

const PANEL_TABS = ['part', 'props', 'config', 'target', 'displayBall'];

function ScrollArrow({ d }: { d: string }) {
  return (
    <svg viewBox="0 0 10 10" className="block h-[10px] w-[10px]" fill="none" stroke="#505050" strokeWidth="2" aria-hidden="true">
      <path d={d} />
    </svg>
  );
}

function FeaturePanel() {
  return (
    <aside className="relative flex w-[298px] shrink-0 flex-col border-r-2 border-[#6a6a6a] bg-[#484848]">
      <div className="mt-[2px] mr-[1px] flex h-4 shrink-0 items-center justify-center border-y border-[#c8c8c8]">
        <span className="h-[5px] w-[5px] rounded-full bg-[#dddddd]" />
      </div>
      <div className="mt-1 flex h-[26px] shrink-0 border-b border-[#888888]">
        {PANEL_TABS.map((name, i) => (
          <button key={name} aria-label={name}
            className={clsx('flex w-10 items-center justify-center border-t border-r border-[#888888]', i === 0 ? 'bg-[#484848]' : 'bg-[#303030]')}>
            <Icon name={name} />
          </button>
        ))}
        <button aria-label="More tabs" className="ml-auto"><Icon name="chevrons" className="h-4 w-5" /></button>
      </div>
      <label className="mr-[2px] ml-[3px] flex h-[26px] shrink-0 items-center border border-[#c8c8c8]">
        <Icon name="filter" />
        <input aria-label="Filter" className="h-5 min-w-0 flex-1 bg-transparent px-1 focus:outline-none" />
      </label>

      <div className="flex min-h-0 flex-1">
        <ul className="flex-1 overflow-hidden">
          {TREE.map(([icon, label, open]) => (
            <li key={label} className="flex h-[22px] items-center">
              <span className="flex w-6 pl-2">
                {open && (
                  <svg viewBox="0 0 4 8" className="block h-2 w-1" aria-hidden="true"><path d="M0 0 L4 4 L0 8 Z" fill="#ffffff" /></svg>
                )}
              </span>
              <button className="flex items-center gap-1 whitespace-nowrap"><Icon name={icon} className="p-px" /> {label}</button>
            </li>
          ))}
        </ul>
        <div className="flex w-[14px] shrink-0 flex-col items-center bg-[#f0f0f0] pt-1 pb-[3px]">
          <ScrollArrow d="M1 7 L5 3 L9 7" />
          <div className="mt-auto mb-3 h-[132px] w-[13px] bg-[#cdcdcd]" />
          <ScrollArrow d="M1 3 L5 7 L9 3" />
        </div>
        <div className="w-px shrink-0" />
      </div>
      <div className="mr-px mb-px flex h-4 shrink-0 items-center bg-[#f0f0f0] pl-[2px]">
        <ScrollArrow d="M7 1 L3 5 L7 9" />
        <div className="ml-1 h-4 w-[213px] bg-[#cdcdcd]" />
        <span className="mr-[17px] ml-auto"><ScrollArrow d="M3 1 L7 5 L3 9" /></span>
      </div>

      {/* Collapse grip */}
      <button aria-label="Collapse panel" className="absolute top-[388px] left-[296px] z-10 flex h-[39px] w-[10px] items-center justify-center border border-[#888888] bg-[#f4f4f4]">
        <span className="h-[6px] w-[6px] rounded-full border border-[#888888] bg-[#cccccc]" />
      </button>
    </aside>
  );
}

function Model() {
  return (
    <svg viewBox="298 168 1622 837" className="absolute inset-0 h-full w-full" fill="none" role="img" aria-label="Car body model">
      <defs>
        <linearGradient id="roof" gradientUnits="userSpaceOnUse" x1="1150" y1="545" x2="1290" y2="330">
          <stop offset="0" stopColor="#080808" />
          <stop offset="0.2" stopColor="#242424" />
          <stop offset="0.35" stopColor="#242424" />
          <stop offset="0.6" stopColor="#171717" />
          <stop offset="1" stopColor="#0c0c0c" />
        </linearGradient>
        <linearGradient id="glass" gradientUnits="userSpaceOnUse" x1="1000" y1="490" x2="1000" y2="673">
          <stop offset="0" stopColor="#bcbcbc" />
          <stop offset="1" stopColor="#a2a2a2" />
        </linearGradient>
        <linearGradient id="glassR" gradientUnits="userSpaceOnUse" x1="1120" y1="530" x2="1080" y2="673">
          <stop offset="0" stopColor="#c4c4c4" />
          <stop offset="0.5" stopColor="#adadad" />
          <stop offset="1" stopColor="#a2a2a2" />
        </linearGradient>
        <linearGradient id="fender" gradientUnits="userSpaceOnUse" x1="850" y1="550" x2="760" y2="720">
          <stop offset="0" stopColor="#6e0f11" />
          <stop offset="0.35" stopColor="#6a0c0e" />
          <stop offset="0.6" stopColor="#580000" />
          <stop offset="1" stopColor="#480000" />
        </linearGradient>
        <radialGradient id="glow">
          <stop offset="0" stopColor="#7c2426" />
          <stop offset="1" stopColor="#7c2426" stopOpacity="0" />
        </radialGradient>
        <radialGradient id="sheen">
          <stop offset="0" stopColor="#2a2a2a" />
          <stop offset="1" stopColor="#2a2a2a" stopOpacity="0" />
        </radialGradient>
        <linearGradient id="shine" gradientUnits="userSpaceOnUse" x1="1165" y1="664" x2="1062" y2="728">
          <stop offset="0" stopColor="#84272a" />
          <stop offset="0.4" stopColor="#7c1f21" />
          <stop offset="1" stopColor="#560000" />
        </linearGradient>
        <linearGradient id="hood" gradientUnits="userSpaceOnUse" x1="1145" y1="655" x2="1050" y2="715">
          <stop offset="0" stopColor="#2a2a2a" />
          <stop offset="1" stopColor="#000000" />
        </linearGradient>
        <linearGradient id="fenderR" gradientUnits="userSpaceOnUse" x1="1080" y1="720" x2="1060" y2="890">
          <stop offset="0" stopColor="#580000" />
          <stop offset="1" stopColor="#460000" />
        </linearGradient>
        <linearGradient id="door" gradientUnits="userSpaceOnUse" x1="1260" y1="610" x2="1300" y2="680">
          <stop offset="0" stopColor="#5a0000" />
          <stop offset="1" stopColor="#4a0000" />
        </linearGradient>
        <linearGradient id="duct" gradientUnits="userSpaceOnUse" x1="735" y1="745" x2="790" y2="815">
          <stop offset="0" stopColor="#8a8a8a" />
          <stop offset="0.25" stopColor="#b4b4b4" />
          <stop offset="0.7" stopColor="#a6a6a6" />
          <stop offset="1" stopColor="#c4c4c4" />
        </linearGradient>
        <linearGradient id="grille" gradientUnits="userSpaceOnUse" x1="825" y1="790" x2="865" y2="850">
          <stop offset="0" stopColor="#b2b2b2" />
          <stop offset="0.55" stopColor="#c8c8c8" />
          <stop offset="0.75" stopColor="#dcdcdc" />
          <stop offset="1" stopColor="#c4c4c4" />
        </linearGradient>
      </defs>

      {/* Silhouette */}
      <path fill="#000000" d="M714 703 Q714 672 725 647 L760 610 L847 548 L887 517 L933 483 L965 460 L1000 434 L1008 429 L1008 425 Q1016 414 1030 407 L1045 397 Q1054 388 1058 376 Q1066 364 1081 351 Q1092 343 1103 341 L1138 334 L1172 329 L1208 324 L1258 331 L1310 342 Q1350 352 1386 368 Q1408 379 1427 392 L1468 419 L1489 443 Q1507 468 1514 487 Q1517 498 1517 515 Q1519 536 1503 552 Q1494 561 1465 561 L1429 556 Q1409 600 1409 623 L1409 648 L1191 803 L1183 808 L1180 743 Q1174 736 1165 736 Q1140 745 1122 772 Q1098 815 1094 879 L1083 883 Q1064 893 1047 893 L1020 891 Q940 887 913 882 Q860 872 827 857 Q785 838 763 820 L743 798 L730 785 Q720 776 718 765 Z" />

      {/* Roof */}
      <path fill="#080808" d="M958 472 Q1090 370 1172 338 Q1230 350 1303 375 Q1215 412 1182 430 Q1130 452 1065 516 L1047 503 Q1010 470 958 472 Z" />
      <path fill="#0b0b0b" d="M1172 338 Q1240 328 1340 362 Q1400 390 1441 422 L1413 423 Q1390 420 1344 390 L1303 375 Z" />
      <path fill="url(#roof)" d="M1065 516 Q1120 458 1182 430 Q1230 408 1303 375 Q1340 385 1379 412 Q1402 425 1441 422 L1365 452 L1275 498 Q1222 532 1195 580 L1190 557 L1183 545 Q1160 530 1117 523 Z" />
      <ellipse cx="1437" cy="513" rx="32" ry="9" fill="url(#sheen)" transform="rotate(-26 1437 513)" />
      <ellipse cx="1489" cy="544" rx="22" ry="7" fill="url(#sheen)" />
      <path fill="#333333" d="M1282 501 L1293 495 L1308 501 L1316 497 L1336 521 Z" />

      {/* Side window and door */}
      <path fill="#ffffff" d="M1176 666 Q1178 636 1188 610 Q1202 574 1241 530 Q1262 511 1282 501 L1310 510 L1336 521 Q1352 536 1361 555 L1181 665 Z" />
      <path fill="url(#door)" d="M1130 698 L1175 667 L1181 665 L1358 554 L1361 557 L1372 555 Q1374 577 1344 622 Q1322 656 1269 703 L1217 752 L1196 772 L1191 803 L1183 808 L1180 743 L1120 740 Z" />
      <path fill="#242424" d="M1196 772 L1241 728 L1296 678 L1330 652 L1348 632 Q1330 665 1296 690 L1241 735 Z" />

      {/* Left front fender */}
      <path fill="url(#fender)" d="M730 785 Q720 776 718 765 L714 703 Q715 665 737 620 Q757 592 780 583 Q798 575 815 571 L847 547 L933 483 L887 523 L852 547 L858 554 Q830 590 822 612 Q803 665 796 704 L777 693 L757 683 Q745 678 735 680 L730 693 L728 705 L730 720 Z" />
      <ellipse cx="746" cy="632" rx="12" ry="32" fill="url(#glow)" transform="rotate(20 746 632)" />
      <path d="M787 596 Q748 636 736 680" stroke="#ffffff" strokeWidth="1.2" strokeDasharray="30 1 2 1 2 1" />
      <path d="M787 596 L815 571" stroke="#300000" />

      {/* Right front fender */}
      <path fill="url(#fenderR)" d="M1147 665 Q1165 662 1175 667 L1182 720 L1182 738 Q1173 733 1165 735 Q1140 745 1122 772 Q1098 815 1094 879 L1083 883 Q1064 893 1047 893 L1018 891 Q1023 868 1028 860 L1035 837 L1046 818 L978 772 Q1015 735 1050 712 Q1090 686 1147 665 Z" />
      <path fill="url(#shine)" d="M1147 665 Q1165 662 1175 667 L1130 698 Q1100 716 1064 727 L1035 724 L1050 712 Q1090 686 1147 665 Z" />
      <ellipse cx="1105" cy="714" rx="44" ry="13" fill="url(#glow)" opacity="0.7" transform="rotate(-32 1105 714)" />
      <ellipse cx="1108" cy="762" rx="38" ry="15" fill="url(#glow)" transform="rotate(-50 1108 762)" />

      {/* Hood sheen */}
      <ellipse cx="856" cy="612" rx="24" ry="42" fill="url(#sheen)" opacity="0.5" transform="rotate(-20 856 612)" />
      <path fill="url(#hood)" d="M1000 670 Q1090 676 1145 666 Q1090 686 1050 711 L1010 730 Z" />

      {/* Windshield */}
      <path fill="#363636" d="M857 568 L857 560 Q900 512 927 492 Q950 474 973 473 Q1005 474 1047 503 L1065 516 Q1140 524 1160 533 Q1188 543 1190 557 Q1190 567 1173 610 L1150 664 L1100 640 L900 560 Z" />
      <path fill="url(#glass)" d="M857 568 Q895 524 940 491 Q963 480 987 490 Q1005 495 1053 528 L958 657 Q856 625 857 568 Z" />
      <path fill="url(#glassR)" d="M1053 528 Q1125 538 1167 557 Q1180 564 1177 583 Q1172 602 1146 664 Q1050 685 958 657 L982 610 Z" />

      {/* Head lamps */}
      <path fill="#ffffff" d="M735 680 Q745 676 757 683 Q775 690 796 704 L790 745 L760 725 L728 705 Q729 690 735 680 Z" />
      <path fill="#ffffff" d="M978 772 Q1018 773 1040 785 Q1054 791 1051 799 L1046 819 L949 803 Z" />
      <path fill="#000000" d="M949 803 L1046 819 L1042 820 L1035 837 L1000 835 Z" />

      {/* Air intakes */}
      <path fill="url(#duct)" d="M732 738 Q725 740 725 752 Q727 765 740 777 L767 803 Q788 823 797 824 L801 820 V794 L797 787 Q780 771 763 758 Q740 739 732 738 Z" />
      <path fill="#6c6c6c" d="M762 758 Q780 770 797 787 L801 794 Q783 785 762 758 Z" />
      <path fill="url(#grille)" d="M847 773 Q828 778 824 790 Q818 812 822 833 Q826 843 863 853 Q870 851 877 829 Q887 803 876 790 Q866 779 847 773 Z" />
      <path fill="#666666" d="M849 774 Q868 780 876 790 Q886 803 877 829 L853 821 Q847 817 847 810 Z" />
      <path fill="#808080" d="M871 785 Q884 797 881 814 L877 829 L868 826 Z" />
      <path fill="#acacac" d="M907 831 L930 831 L1010 841 Q1034 845 1035 858 Q1033 873 1013 873 L993 873 L907 864 Q894 862 896 853 Q899 836 907 831 Z" />
      <path fill="#8a8a8a" d="M907 831 L928 831 L929 846 L898 860 Q894 857 896 853 Q899 836 907 831 Z" />
      <path fill="#666666" d="M928 832 L1010 841 Q1033 845 1035 855 L930 846 Q927 840 928 832 Z" />

      {/* Selected wheel arch edge */}
      <path d="M1093 879 Q1096 820 1122 772 Q1146 735 1169 736 Q1189 740 1189 768 Q1189 795 1178 818" stroke="#ff8616" strokeWidth="4" />

      <path fill="#ffffff" d="M1177 611 h1 v1 h-1 Z M1168 635 h1 v1 h-1 Z M1023 727 h1 v1 h-1 Z M1018 731 h1 v1 h-1 Z M1162 721 h1 v1 h-1 Z M1117 364 h2 v1 h-2 Z M1378 546 h1 v1 h-1 Z M1415 567 h1 v1 h-1 Z M1366 623 h1 v1 h-1 Z M1351 613 h1 v1 h-1 Z M1289 686 h1 v1 h-1 Z M1266 720 h1 v1 h-1 Z M1229 748 h1 v1 h-1 Z" />

      {/* Orientation triad */}
      <g strokeWidth="4">
        <path d="M339 948 V930" stroke="#1b661b" />
        <path d="M339 922 L344 933 H334 Z" fill="#2fae3c" stroke="#1b661b" strokeWidth="1" />
        <path d="M340 948 L356 954" stroke="#b5191e" />
        <path d="M364 957 L354 949 L352 957 Z" fill="#ee4f52" stroke="#b5191e" strokeWidth="1" />
        <path d="M339 948 L328 955" stroke="#171a8c" />
        <path d="M321 959 L327 951 L331 959 Z" fill="#1c1ce0" stroke="#171a8c" strokeWidth="1" />
      </g>
      <g className="font-['Liberation_Sans'] text-[11px]" textAnchor="middle">
        <text x="339" y="920" fill="#1b7a1b">Y</text>
        <text x="366" y="961" fill="#dd2222">X</text>
        <text x="319" y="965" fill="#2222dd">Z</text>
      </g>
    </svg>
  );
}

const TASK_PANE = ['home', 'library', 'folder', 'palette', 'ball', 'props'];

function Viewport() {
  return (
    <main className="relative flex flex-1 justify-end bg-white">
      <Model />
      <div className="relative mt-[22px] flex w-[26px] flex-col self-start border-t border-l border-[#888888]">
        {TASK_PANE.map((name) => (
          <button key={name} aria-label={name}
            className={clsx('flex h-6 items-center justify-center border-b border-[#888888]', name === 'ball' ? 'bg-[#b0b0b0]' : 'bg-[#303030]')}>
            <Icon name={name} className="h-[18px] w-[18px]" />
          </button>
        ))}
      </div>
    </main>
  );
}

const NAV_ARROWS = ['M3 2 V10 M10 2 L5 6 L10 10 Z', 'M9 2 L4 6 L9 10 Z', 'M4 2 L9 6 L4 10 Z', 'M10 2 V10 M3 2 L8 6 L3 10 Z'];

function BottomTabs() {
  return (
    <div className="flex h-[17px] border-y border-[#888888] leading-[14px]">
      <div className="w-[27px] bg-[#b8b8b8]" />
      {NAV_ARROWS.map((d) => (
        <button key={d} aria-label="Scroll tabs" className="flex w-4 items-center justify-center border border-[#8f8f8f] bg-[#b0b0b0]">
          <svg viewBox="0 0 13 12" className="block h-3 w-[13px]" fill="#8a8a8a" stroke="#8a8a8a" aria-hidden="true"><path d={d} /></svg>
        </button>
      ))}
      <button className="w-[57px] border-r border-[#888888] pb-px pl-1 font-bold">Model</button>
      <button className="w-[68px] border-r border-[#888888] bg-[#303030] pb-px">3D Views</button>
      <button className="w-[108px] border-r border-[#888888] bg-[#303030] pr-[6px] pb-px">Motion Study 1</button>
    </div>
  );
}

function StatusBar() {
  return (
    <footer className="flex h-[18px] items-center pl-px">
      <span>SOLIDWORKS Premium 2016 x64 Edition</span>
      <span className="ml-auto h-4 w-[9px] border-x border-[#c8c8c8]" />
      <span className="w-[71px] border-r border-[#c8c8c8] pl-[3px] leading-4">Editing Part</span>
      <span className="ml-[15px] h-4 border-l border-[#c8c8c8]" />
      <button className="ml-[31px] flex items-center gap-[18px]">
        MMGS <Caret className="rotate-180" />
      </button>
      <svg viewBox="0 0 16 12" className="mr-[3px] ml-[69px] h-3 w-4" aria-hidden="true">
        <path d="M1 2 L8 0 L15 5 L13 9 L8 12 L2 7 Z" fill="#e0e0e0" />
        <path d="M3 3 L11 8 M6 2 L13 6 M9 4 L7 9" stroke="#444444" />
      </svg>
    </footer>
  );
}

function SwCube() {
  return (
    <>
      <path d="M1 3 L10 0 L23 2 V15 L14 18 L1 16 Z" fill="#b3141a" />
      <path d="M1 3 L10 0 L23 2 L14 5 Z" fill="#e8262b" />
      <path d="M14 5 L23 2 V15 L14 18 Z" fill="#7c0d10" />
      <g fill="#ffffff" className="font-['Liberation_Sans'] font-bold">
        <text x="3" y="15" fontSize="11">S</text>
        <text x="12" y="15" fontSize="11">W</text>
        <text x="6" y="22" fontSize="7">2016</text>
      </g>
    </>
  );
}

const APPS: Array<{ name: string; state?: 'running' | 'active'; icon: ReactNode }> = [
  {
    name: 'Start',
    icon: <path d="M4 6 L11 5 V11 H4 Z M12 5 L20 4 V11 H12 Z M4 12 H11 V18 L4 17 Z M12 12 H20 V20 L12 19 Z" fill="#ffffff" />,
  },
  {
    name: 'Search',
    icon: <path d="M3 20 L9 13 M8 9 A5 5 0 1 1 18 9 A5 5 0 1 1 8 9" fill="none" stroke="#ffffff" strokeWidth="1.5" />,
  },
  {
    name: 'Task view',
    icon: <path d="M6 5 H16 V19 H6 Z M4 7 H2 V17 H4 M18 7 H20 V17 H18" fill="none" stroke="#ffffff" strokeWidth="1.3" />,
  },
  {
    name: 'Store',
    icon: (
      <>
        <path d="M8 6 V4 Q8 1 12 1 Q16 1 16 4 V6" fill="none" stroke="#ffffff" strokeWidth="1.3" />
        <path d="M1 6 H23 L22 23 H2 Z" fill="#ffffff" />
        <path d="M7 9 H11 V13 H7 Z" fill="#f25022" />
        <path d="M13 9 H17 V13 H13 Z" fill="#7fba00" />
        <path d="M7 15 H11 V19 H7 Z" fill="#00a4ef" />
        <path d="M13 15 H17 V19 H13 Z" fill="#ffb900" />
      </>
    ),
  },
  {
    name: 'Edge',
    icon: (
      <path d="M1 11 Q3 2 12 2 Q21 2 21 14 H8 Q9 19 14 19 Q17 19 20 17 V21 Q17 23 12 23 Q3 22 4 13 Q5 9 9 7 Q3 7 1 11 Z M8 11 H15 Q15 7 12 7 Q8 7 8 11 Z" fill="#1e7fd8" fillRule="evenodd" />
    ),
  },
  {
    name: 'Mail',
    icon: (
      <>
        <path d="M0 7 L12 2 L24 7 V21 H0 Z" fill="#ffffff" />
        <path d="M1 8 L11 12 L13 17 L16 12 L23 8 Z" fill="#000000" />
      </>
    ),
  },
  {
    name: 'AutoCAD',
    icon: (
      <>
        <path d="M0 0 H24 V24 H0 Z" fill="#e98b88" />
        <path d="M0 0 H24 L0 24 Z" fill="#f3cfcc" />
        <path d="M4 19 L11 3 H14 L21 16 H16 L12 13 L8 18 Z" fill="#b0161c" />
        <path d="M12 7 L15 12 L10 12 Z" fill="#e8a5a0" />
        <path d="M13 19 H23 V23 H13 Z" fill="#6a5553" />
      </>
    ),
  },
  {
    name: 'Revit',
    icon: (
      <>
        <path d="M0 0 H24 V24 H0 Z" fill="#c3dcef" />
        <path d="M12 12 H24 V24 H12 Z" fill="#a5c9e6" />
        <text x="5" y="19" fontSize="20" className="font-['Liberation_Sans'] font-bold" fill="#1f5fa5">R</text>
      </>
    ),
  },
  { name: 'SOLIDWORKS 2016', icon: <SwCube /> },
  {
    name: 'File Explorer',
    state: 'running',
    icon: (
      <>
        <path d="M1 3 H9 L11 5 H22 V20 H1 Z" fill="#ffe296" />
        <path d="M1 3 H9 V6 H1 Z" fill="#e6b93f" />
        <path d="M5 21 V13 H19 V21 H15 V17 H9 V21 Z" fill="#3bb0e0" />
      </>
    ),
  },
  {
    name: 'Chrome',
    state: 'running',
    icon: (
      <>
        <circle cx="12" cy="12" r="11" fill="#f7d046" />
        <path d="M12 12 L2.5 6.5 A11 11 0 0 1 21.5 6.5 H12 Z" fill="#db4437" />
        <path d="M2.5 6.5 L8 15 L13 23 A11 11 0 0 1 2.5 6.5 Z" fill="#159b57" />
        <circle cx="12" cy="12" r="5.2" fill="#ffffff" />
        <circle cx="12" cy="12" r="4.2" fill="#4285f4" />
      </>
    ),
  },
  { name: 'SOLIDWORKS', state: 'active', icon: <SwCube /> },
];

function Taskbar() {
  return (
    <div className="flex h-10 items-stretch bg-black">
      {APPS.map(({ name, state, icon }) => (
        <button key={name} aria-label={name} className={clsx('relative flex w-[49px] items-center justify-center pr-[2px]', state === 'active' && 'bg-[#333333]')}>
          <svg viewBox="0 0 24 24" className="block h-6 w-6" aria-hidden="true">{icon}</svg>
          {state && <span className={clsx('absolute bottom-0 h-[2px] bg-[#76b9ed]', state === 'active' ? 'w-full' : 'w-10')} />}
        </button>
      ))}
      <div className="ml-auto flex items-center text-white">
        <svg viewBox="0 0 16 16" className="mr-[21px] h-4 w-4" fill="none" stroke="#ffffff" strokeWidth="1.2" aria-hidden="true">
          <circle cx="5" cy="8" r="2.4" /><path d="M1 15 Q1 11 5 11 Q8 11 9 14" />
          <circle cx="11" cy="4" r="2.4" /><path d="M9 7 Q14 6 15 11" />
        </svg>
        <svg viewBox="0 0 12 8" className="mr-[10px] h-2 w-3" fill="none" stroke="#ffffff" strokeWidth="1.3" aria-hidden="true"><path d="M1 7 L6 1 L11 7" /></svg>
        <svg viewBox="0 0 16 12" className="mr-2 h-3 w-4" fill="none" stroke="#ffffff" aria-hidden="true">
          <path d="M5 3 H14 V10 H4 V7 M15 5 V8 M0 3 H5 M1 1 H4 V5 H2 Z" /><path d="M6 5 H13 V9 H6 Z" fill="#ffffff" />
        </svg>
        <svg viewBox="0 0 16 14" className="mr-2 h-[14px] w-4" fill="none" stroke="#ffffff" aria-hidden="true">
          <path d="M5 2 H15 V10 H3 V5 M9 10 V13 M6 13 H12 M1 1 H4 V5 H1 Z" />
        </svg>
        <svg viewBox="0 0 16 14" className="mr-4 h-[14px] w-4" fill="none" stroke="#ffffff" aria-hidden="true">
          <path d="M1 5 H3 L6 2 V12 L3 9 H1 Z M8 5 Q10 7 8 9 M10 3 Q13 7 10 11 M12 1 Q17 7 12 13" />
        </svg>
        <span className="mr-5 w-3 text-center text-xs">ع</span>
        <div className="w-[52px] text-center leading-[18px]">
          <div>4:52 AM</div>
          <div>2/1/2018</div>
        </div>
        <button aria-label="Notifications" className="relative mr-4 ml-[18px] h-6 w-6">
          <svg viewBox="0 0 24 24" className="h-6 w-6" aria-hidden="true">
            <path d="M0 3 H16 V15 H9 V19 L5 15 H0 Z" fill="#ffffff" />
            <path d="M3 6 H13 M3 9 H13 M3 12 H10" stroke="#000000" strokeWidth="1.3" />
          </svg>
          <span className="absolute right-0 bottom-0 h-4 w-4 rounded-full border border-[#888888] bg-[#222222] text-center leading-[14px]">1</span>
        </button>
      </div>
    </div>
  );
}

export default function App() {
  return (
    <div className="flex h-screen min-h-[640px] flex-col overflow-hidden bg-[#484848] font-['Open_Sans','Noto_Sans',sans-serif] text-[11px] text-[#f0f0f0]">
      <TitleBar />
      <ViewsBar />
      <Ribbon />
      <TabRow />
      <div className="flex min-h-0 flex-1">
        <FeaturePanel />
        <Viewport />
      </div>
      <BottomTabs />
      <StatusBar />
      <Taskbar />
    </div>
  );
}
